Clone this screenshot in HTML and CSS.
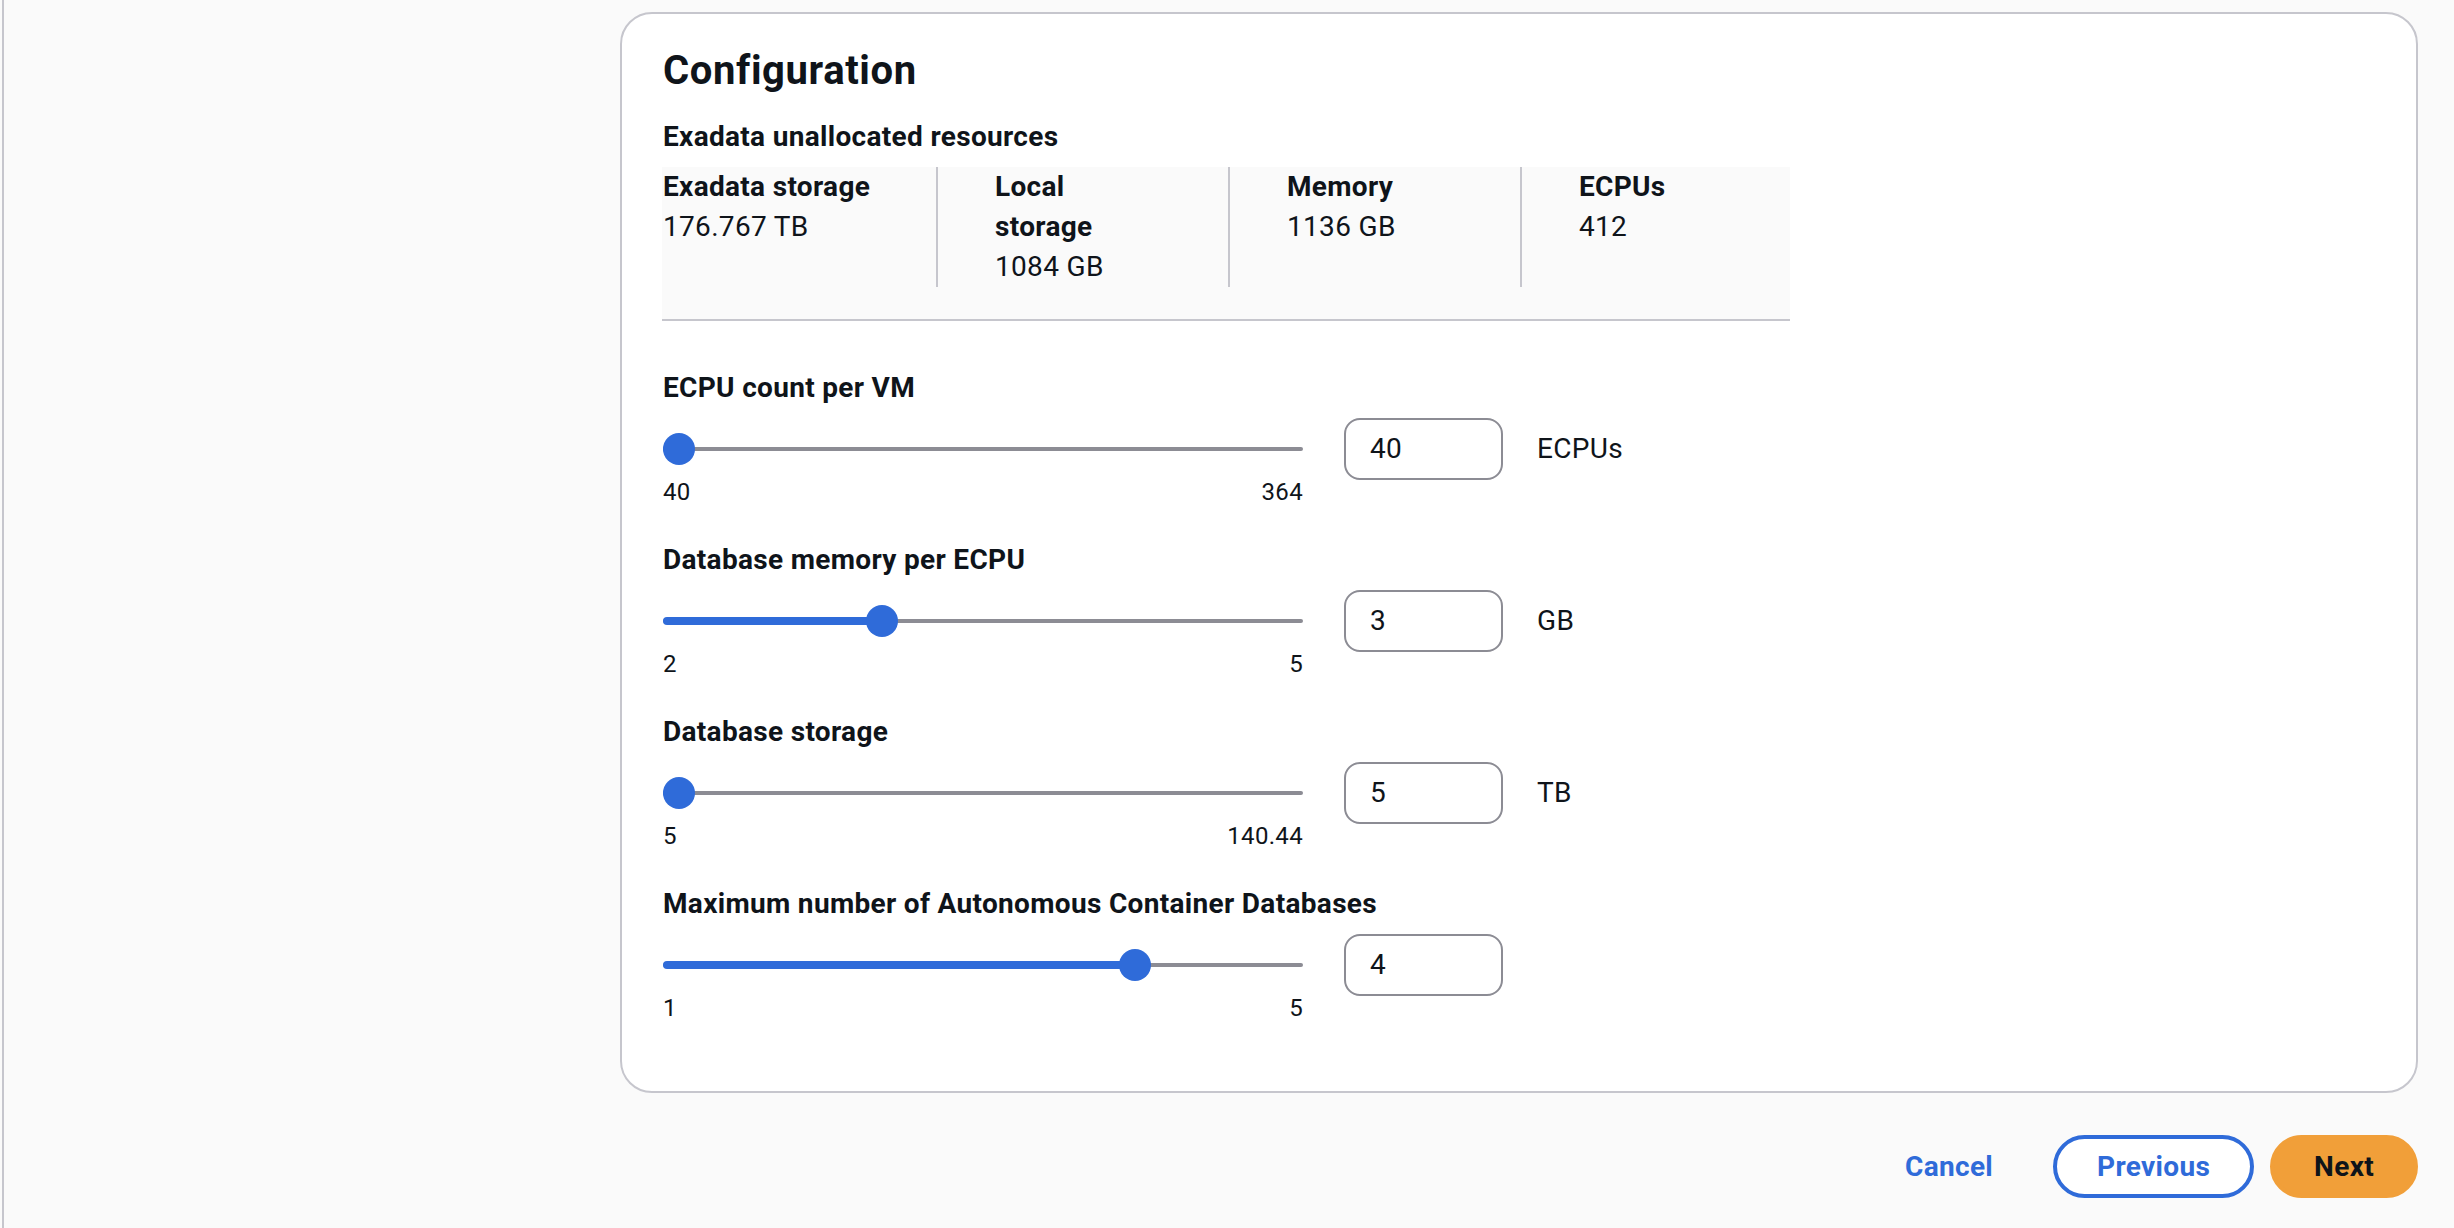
FILE: index.html
```html
<!DOCTYPE html>
<html lang="en">
<head>
<meta charset="utf-8">
<title>Configuration</title>
<link rel="stylesheet" href="styles.css">
</head>
<body>
<div class="layout">
  <div class="rail"></div>
  <main class="main">
    <section class="card">
      <h2 class="card-title">Configuration</h2>
      <h3 class="section-title">Exadata unallocated resources</h3>
      <div class="stats">
        <div class="stat"><div class="stat-key">Exadata storage</div><div class="stat-val">176.767 TB</div></div>
        <div class="stat"><div class="stat-key">Local storage</div><div class="stat-val">1084 GB</div></div>
        <div class="stat"><div class="stat-key">Memory</div><div class="stat-val">1136 GB</div></div>
        <div class="stat"><div class="stat-key">ECPUs</div><div class="stat-val">412</div></div>
      </div>

      <div class="fields">
        <div class="field">
          <div class="field-label">ECPU count per VM</div>
          <div class="control">
            <div class="slider">
              <div class="track-area">
                <div class="track"></div>
                <div class="thumb-rail">
                  <div class="fill" style="width: calc(16px + 0%)"></div>
                  <div class="thumb" style="left: 0%"></div>
                </div>
              </div>
              <div class="ticks"><span>40</span><span>364</span></div>
            </div>
            <div class="input">40</div>
            <span class="unit">ECPUs</span>
          </div>
        </div>

        <div class="field">
          <div class="field-label">Database memory per ECPU</div>
          <div class="control">
            <div class="slider">
              <div class="track-area">
                <div class="track"></div>
                <div class="thumb-rail">
                  <div class="fill" style="width: calc(16px + 33.333%)"></div>
                  <div class="thumb" style="left: 33.333%"></div>
                </div>
              </div>
              <div class="ticks"><span>2</span><span>5</span></div>
            </div>
            <div class="input">3</div>
            <span class="unit">GB</span>
          </div>
        </div>

        <div class="field">
          <div class="field-label">Database storage</div>
          <div class="control">
            <div class="slider">
              <div class="track-area">
                <div class="track"></div>
                <div class="thumb-rail">
                  <div class="fill" style="width: calc(16px + 0%)"></div>
                  <div class="thumb" style="left: 0%"></div>
                </div>
              </div>
              <div class="ticks"><span>5</span><span>140.44</span></div>
            </div>
            <div class="input">5</div>
            <span class="unit">TB</span>
          </div>
        </div>

        <div class="field">
          <div class="field-label">Maximum number of Autonomous Container Databases</div>
          <div class="control">
            <div class="slider">
              <div class="track-area">
                <div class="track"></div>
                <div class="thumb-rail">
                  <div class="fill" style="width: calc(16px + 75%)"></div>
                  <div class="thumb" style="left: 75%"></div>
                </div>
              </div>
              <div class="ticks"><span>1</span><span>5</span></div>
            </div>
            <div class="input">4</div>
          </div>
        </div>
      </div>
    </section>

    <div class="actions">
      <button class="btn btn-link" type="button">Cancel</button>
      <button class="btn btn-normal" type="button">Previous</button>
      <button class="btn btn-primary" type="button">Next</button>
    </div>
  </main>
</div>
</body>
</html>
```

FILE: styles.css
```css
* {
  box-sizing: border-box;
}

html,
body {
  margin: 0;
  padding: 0;
}

body {
  width: 2454px;
  height: 1228px;
  overflow: hidden;
  background: #fafafa;
  color: #0f141a;
  font-family: Roboto, "Open Sans", "Liberation Sans", sans-serif;
  letter-spacing: 0.02em;
}

.layout {
  display: flex;
  min-height: 1228px;
}

.rail {
  flex: none;
  width: 618px;
  margin-left: 2px;
  border-left: 2px solid #c6c6cd;
}

.main {
  flex: 1;
  padding: 12px 36px 0 0;
}

.card {
  background: #ffffff;
  border: 2px solid #c6c6cd;
  border-radius: 32px;
  padding: 33px 40px 67px 41px;
}

.card-title {
  margin: 0;
  font-size: 40px;
  line-height: 48px;
  font-weight: 700;
  letter-spacing: 0.015em;
}

.section-title {
  margin: 22px 0 10px;
  font-size: 28px;
  line-height: 40px;
  font-weight: 700;
}

.stats {
  display: grid;
  grid-template-columns: 273px 292px 292px 1fr;
  width: 1128px;
  margin-left: -1px;
  padding: 0 0 32px 1px;
  background: #fafafa;
  border-bottom: 2px solid #c6c6cd;
}

.stat {
  font-size: 28px;
  line-height: 40px;
}

.stat + .stat {
  border-left: 2px solid #c6c6cd;
  padding: 0 80px 0 57px;
}

.stat-key {
  font-weight: 700;
}

.fields {
  display: flex;
  flex-direction: column;
  gap: 32px;
  margin-top: 47px;
}

.field-label {
  font-size: 28px;
  line-height: 40px;
  font-weight: 700;
}

.control {
  display: flex;
  align-items: flex-start;
  margin-top: 10px;
}

.slider {
  flex: none;
  width: 640px;
}

.track-area {
  position: relative;
  height: 62px;
}

.track {
  position: absolute;
  left: 0;
  right: 0;
  top: 29px;
  height: 4px;
  border-radius: 2px;
  background: #8c8c94;
}

.thumb-rail {
  position: absolute;
  left: 16px;
  right: 16px;
  top: 0;
  bottom: 0;
}

.fill {
  position: absolute;
  left: -16px;
  top: 27px;
  height: 8px;
  border-radius: 4px;
  background: #2f6bd9;
}

.thumb {
  position: absolute;
  top: 15px;
  width: 32px;
  height: 32px;
  margin-left: -16px;
  border-radius: 50%;
  background: #2f6bd9;
}

.ticks {
  display: flex;
  justify-content: space-between;
  margin-top: -4px;
  font-size: 24px;
  line-height: 32px;
}

.input {
  flex: none;
  width: 159px;
  height: 62px;
  margin-left: 41px;
  padding: 0 24px;
  border: 2px solid #8c8c94;
  border-radius: 16px;
  background: #ffffff;
  font-size: 28px;
  line-height: 58px;
}

.unit {
  margin-left: 34px;
  font-size: 28px;
  line-height: 62px;
}

.actions {
  display: flex;
  justify-content: flex-end;
  gap: 16px;
  margin-top: 42px;
}

.btn {
  display: inline-flex;
  align-items: center;
  height: 63px;
  margin: 0;
  padding: 0 40px;
  border: 4px solid transparent;
  border-radius: 32px;
  background: transparent;
  font-family: inherit;
  font-size: 28px;
  line-height: 40px;
  font-weight: 700;
  letter-spacing: inherit;
  cursor: pointer;
}

.btn-link {
  color: #2f6bd9;
}

.btn-normal {
  border-color: #2f6bd9;
  background: #ffffff;
  color: #2f6bd9;
}

.btn-primary {
  border-color: #f19f39;
  background: #f19f39;
  color: #0f141a;
}
```
